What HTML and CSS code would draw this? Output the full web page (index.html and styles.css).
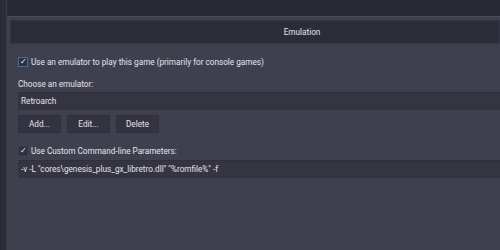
FILE: index.html
```html
<!DOCTYPE html>
<html>
<head>
  <meta charset="utf-8">
  <title>Emulation</title>
  <link rel="stylesheet" href="styles.css">
</head>
<body>
  <div id="window">
    <div id="rail"></div>
    <div id="panel">
      <div class="panel-head">Emulation</div>
      <div class="panel-body">
        <label class="check focused"><span class="box">&#10003;</span>Use an emulator to play this game (primarily for console games)</label>
        <div class="caption">Choose an emulator:</div>
        <div class="field">Retroarch</div>
        <div class="buttons">
          <button>Add...</button>
          <button>Edit...</button>
          <button>Delete</button>
        </div>
        <label class="check tight"><span class="box">&#10003;</span>Use Custom Command-line Parameters:</label>
        <div class="field">-v -L "cores\genesis_plus_gx_libretro.dll" "%romfile%" -f</div>
      </div>
    </div>
  </div>
</body>
</html>
```
FILE: styles.css
```css
* {
  margin: 0;
  padding: 0;
  box-sizing: border-box;
}

body {
  background-color: #2a2a35;
  font-family: "Roboto", sans-serif;
  font-size: 8.2px;
  line-height: 12px;
  color: #e4e4ea;
  width: 500px;
  height: 250px;
  overflow: hidden;
}

#window {
  display: flex;
  padding-top: 16px;
  height: 250px;
}
#rail {
  width: 7px;
  margin-top: -16px;
  border-left: 2px solid #2a2a35;
  border-right: 1px solid #3b3c49;
  background-color: #2d2d39;
}
#panel {
  flex: 1;
  background-color: #3f404d;
  border-top: 1px solid #4b4c5a;
  padding: 3px 0 0 3px;
}
#panel > .panel-head {
  background-color: #2c2c38;
  border: 1px solid #353643;
  height: 24px;
  line-height: 22px;
  text-align: center;
  padding-left: 94px;
}
#panel > .panel-body {
  padding: 13px 0 0 8px;
}

.check {
  display: flex;
  align-items: center;
  height: 10px;
  margin-bottom: 11px;
}
.check.tight {
  margin-bottom: 4px;
}
.check > .box {
  width: 10px;
  height: 10px;
  margin-right: 3px;
  background-color: #2f303b;
  border: 1px solid #3a3b48;
  color: #f0f0f0;
  font-size: 8px;
  line-height: 8px;
  text-align: center;
}
.check.focused > .box {
  border-color: #4a6a9a;
}

.caption {
  margin-bottom: 2px;
}

.field {
  background-color: #34353f;
  border-top: 1px solid #2f303a;
  height: 18px;
  line-height: 17px;
  padding-left: 3px;
  margin-right: -2px;
}

.buttons {
  display: flex;
  gap: 6px;
  margin: 5px 0 13px;
}
.buttons > button {
  width: 43px;
  height: 18px;
  background-color: #33343f;
  border: 1px solid #2f303a;
  color: #e4e4ea;
  font: inherit;
}
```
